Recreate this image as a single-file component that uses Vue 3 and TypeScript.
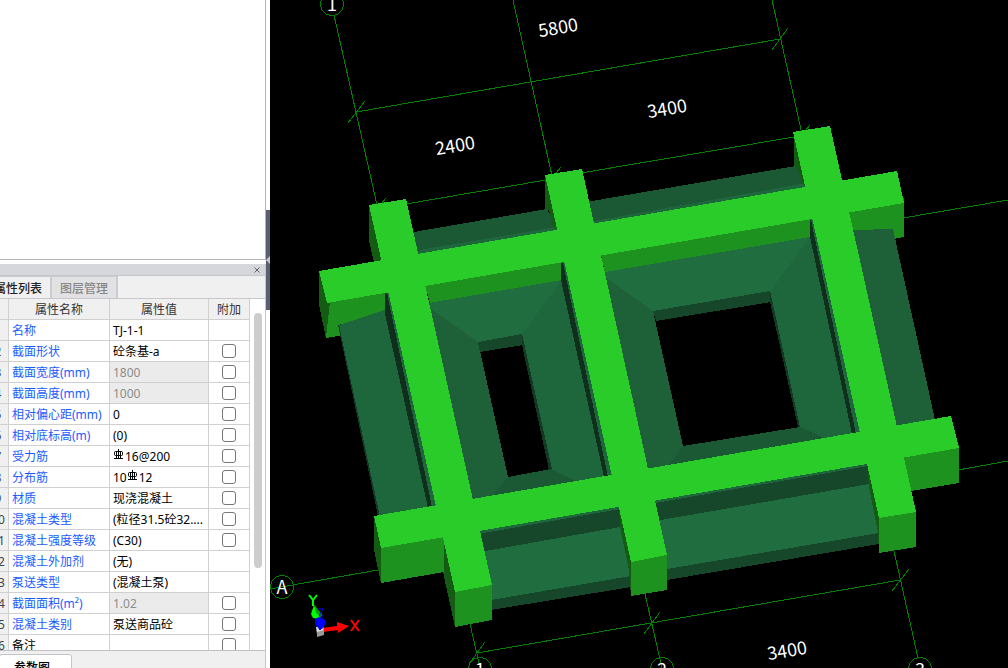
<script setup lang="ts">
import { reactive } from 'vue'

interface Property {
  name: string
  value: string[]
  checkable: boolean
  readonly?: boolean
  plain?: boolean
  checked: boolean
}

// A value is a list of fragments; a rebar grade mark stands between fragments.
const row = (name: string, value: string | string[], checkable = true, extra: Partial<Property> = {}): Property => ({
  name,
  value: Array.isArray(value) ? value : [value],
  checkable,
  checked: false,
  ...extra,
})

const rows = reactive<Property[]>([
  row('名称', 'TJ-1-1', false),
  row('截面形状', '砼条基-a'),
  row('截面宽度(mm)', '1800', true, { readonly: true }),
  row('截面高度(mm)', '1000', true, { readonly: true }),
  row('相对偏心距(mm)', '0'),
  row('相对底标高(m)', '(0)'),
  row('受力筋', ['', '16@200']),
  row('分布筋', ['10', '12']),
  row('材质', '现浇混凝土'),
  row('混凝土类型', '(粒径31.5砼32....'),
  row('混凝土强度等级', '(C30)'),
  row('混凝土外加剂', '(无)', false),
  row('泵送类型', '(混凝土泵)', false),
  row('截面面积(m²)', '1.02', true, { readonly: true }),
  row('混凝土类别', '泵送商品砼'),
  row('备注', '', true, { plain: true }),
])

interface Face {
  tone: string
  points: string
}

const faces: Face[] = [
  // outer slab, back side
  { tone: 'back', points: '408,233 547,209 562,235 416,260' },
  { tone: 'slope', points: '419,250 556,227 562,235 417,258' },
  { tone: 'back', points: '586,202 796,166 815,192 593,230' },
  { tone: 'slope', points: '594,221 806,183 812,192 594,228' },
  // front faces of the rear beam
  { tone: 'front', points: '326,300 390,290 386,328 338,336 326,338' },
  { tone: 'front', points: '424,282 562,258 562,280 430,303' },
  { tone: 'front', points: '600,250 811,214 811,237 605,273' },
  { tone: 'front', points: '848,208 904,198 904,237 848,248' },
  // outer slab, left and right sides
  { tone: 'rim', points: '338,325 341,324 381,514 378,516' },
  { tone: 'slope', points: '339,325 385,310 432,508 380,517' },
  { tone: 'side', points: '853,230 893,229 935,420 895,428' },
  // left bay
  { tone: 'lit', points: '429,303 562,280 522,334 478,342 430,308' },
  { tone: 'side', points: '430,308 478,342 508,477 492,497 470,500' },
  { tone: 'slope', points: '562,280 522,334 551,469 575,482 608,477' },
  { tone: 'back', points: '508,477 551,469 576,481 492,496' },
  { tone: 'shade', points: '478,342 522,334 523,345 480,352' },
  { tone: 'rim', points: '522,334 552,469 549,470 522,345' },
  // right bay
  { tone: 'lit', points: '605,272 810,237 770,291 653,311 605,277' },
  { tone: 'side', points: '605,277 653,311 683,446 668,467 646,470' },
  { tone: 'slope', points: '810,237 770,291 800,427 824,439 856,434' },
  { tone: 'back', points: '683,446 800,427 825,438 668,466' },
  { tone: 'shade', points: '653,311 770,291 771,302 656,321' },
  { tone: 'rim', points: '770,291 800,427 798,427 770,302' },
  // shaded left faces along the long beams
  { tone: 'slope', points: '386,293 390,292 437,507 430,508' },
  { tone: 'slope', points: '562,262 566,261 613,476 606,477' },
  { tone: 'slope', points: '811,219 815,218 861,433 854,434' },
  { tone: 'groove', points: '385,293 387,293 432,507 428,508 385,314' },
  { tone: 'groove', points: '561,263 563,263 608,477 604,477 561,280' },
  { tone: 'groove', points: '810,220 811,220 856,434 852,434 810,237' },
  // outer slab, front side
  { tone: 'lit', points: '480,530 619,507 632,577 492,601' },
  { tone: 'shade', points: '480,533 620,509 620,527 480,552' },
  { tone: 'slope', points: '478,530 620,506 620,509 478,534' },
  { tone: 'shade', points: '491,600 631,576 631,587 491,610' },
  { tone: 'lit', points: '655,500 868,464 880,533 666,570' },
  { tone: 'shade', points: '655,503 868,466 869,484 655,521' },
  { tone: 'slope', points: '654,500 868,463 868,466 654,503' },
  { tone: 'shade', points: '667,569 879,533 879,544 667,580' },
  // beam ends, left faces
  { tone: 'dark', points: '369,205 369,241 374,262 390,261' },
  { tone: 'dark', points: '545,175 545,210 549,210 553,227 557,229 562,229' },
  { tone: 'dark', points: '794,132 794,167 797,167 802,183 805,186 812,186' },
  { tone: 'dark', points: '319,270 319,305 326,338 330,302' },
  { tone: 'dark', points: '374,516 374,550 381,583 385,547' },
  { tone: 'dark', points: '443,537 443,572 455,627 460,590' },
  { tone: 'dark', points: '619,506 620,527 629,570 631,596 636,561' },
  { tone: 'dark', points: '867,463 869,487 878,532 879,553 884,518' },
  // beam ends, front faces
  { tone: 'front', points: '381,545 444,534 444,572 381,583' },
  { tone: 'front', points: '902,455 959,445 959,483 911,491' },
  { tone: 'front', points: '455,589 492,582 492,620 455,627' },
  { tone: 'front', points: '631,559 667,552 667,590 631,596' },
  { tone: 'front', points: '879,516 916,509 916,547 879,553' },
  // top faces of the beams
  { tone: 'top', points: '319,271 897,171 904,203 327,303' },
  { tone: 'top', points: '374,516 951,416 959,448 381,548' },
  { tone: 'top', points: '369,205 406,199 492,585 455,592' },
  { tone: 'top', points: '545,175 582,169 667,555 631,562' },
  { tone: 'top', points: '793,132 830,126 916,512 879,518' },
]

const gridLines = [
  'M334 15L377 205', 'M513 0L552 176', 'M772 0L802 134',
  'M356 112L780 39', 'M406 204L546 180', 'M581 173L794 137',
  'M348 123L365 101', 'M772 50L788 28', 'M381 204L386 198', 'M556 173L561 167', 'M805 131L810 125',
  'M903 218L1008 200', 'M958 470L1008 461', 'M270 589L378 570',
  'M470 624L479 663', 'M645 594L662 668', 'M894 551L918 658',
  'M477 653L900 580', 'M485 642L469 664', 'M660 612L644 634', 'M909 569L892 591',
]

const dimensions = [
  { x: 558, y: 27, text: '5800' },
  { x: 455, y: 145, text: '2400' },
  { x: 667, y: 108, text: '3400' },
  { x: 787, y: 650, text: '3400' },
]

const axes = [
  { x: 332, y: 4, text: '1' },
  { x: 282, y: 587, text: 'A' },
  { x: 480, y: 669, text: '1' },
  { x: 662, y: 669, text: '2' },
  { x: 920, y: 669, text: '3' },
]

const bubble = (x: number, y: number): string =>
  Array.from({ length: 12 }, (_, i) => {
    const a = (i * Math.PI) / 6
    return `${Math.round(x + 12 * Math.cos(a))},${Math.round(y + 12 * Math.sin(a))}`
  }).join(' ')
</script>

<template>
  <div class="workspace">
    <aside class="dock">
      <section class="list-pane"></section>
      <section class="props">
        <header class="title-bar">
          <button class="close" type="button" aria-label="关闭">
            <svg viewBox="0 0 6 6" width="6" height="6"><path d="M.5 .5L5.500 5.500M5.500 .5L.5 5.500" /></svg>
          </button>
        </header>
        <nav class="tabs">
          <button class="tab active" type="button">属性列表</button>
          <button class="tab" type="button">图层管理</button>
        </nav>
        <div class="grid-area">
          <table>
            <colgroup>
              <col class="c-no" /><col class="c-name" /><col class="c-value" /><col class="c-extra" />
            </colgroup>
            <thead>
              <tr><th></th><th>属性名称</th><th>属性值</th><th>附加</th></tr>
            </thead>
            <tbody>
              <tr v-for="(item, i) in rows" :key="item.name">
                <td class="no">{{ i + 1 }}</td>
                <td class="name" :class="{ plain: item.plain }">{{ item.name }}</td>
                <td class="value" :class="{ locked: item.readonly }">
                  <template v-for="(part, p) in item.value" :key="p">
                    <svg v-if="p > 0" class="rebar" viewBox="0 0 11 11" width="11" height="11">
                      <path d="M5.500 0V10M3.500 2V10M7.500 2V10M1 9.500H10" />
                      <rect x="1.500" y="2.500" width="8" height="4" rx="1" />
                    </svg>{{ part }}</template>
                </td>
                <td class="extra">
                  <input v-if="item.checkable" v-model="item.checked" type="checkbox" :aria-label="item.name" />
                </td>
              </tr>
            </tbody>
          </table>
          <div class="track"><div class="thumb"></div></div>
        </div>
        <footer class="footer">
          <button class="sheet" type="button">参数图</button>
        </footer>
      </section>
    </aside>
    <div class="splitter">
      <button class="handle" type="button" aria-label="折叠">
        <svg viewBox="0 0 4 8" width="4" height="8"><path d="M4 0V8L0 4Z" /></svg>
      </button>
    </div>
    <main class="view">
      <svg class="scene" viewBox="270 0 738 668" preserveAspectRatio="xMinYMin slice">
        <g class="lines">
          <path v-for="d in gridLines" :key="d" :d="d" />
          <polygon v-for="a in axes" :key="a.x" :points="bubble(a.x, a.y)" />
        </g>
        <polygon v-for="(f, i) in faces" :key="i" :class="f.tone" :points="f.points" />
        <g class="labels">
          <text
            v-for="d in dimensions"
            :key="d.x"
            :transform="`translate(${d.x} ${d.y}) rotate(-10)`"
            y="7"
          >{{ d.text }}</text>
          <text v-for="a in axes" :key="a.x" :x="a.x" :y="a.y + 7">{{ a.text }}</text>
        </g>
        <g class="triad">
          <path class="x" d="M322 628L337 626V622L349 626L338 633V630L323 632Z" />
          <path class="y" d="M314 605L322 615L319 619L313 618L311 614Z" />
          <path class="y-shade" d="M314 605L316 613L320 616L322 614Z" />
          <path class="origin" d="M316 627L323 625L324 632L317 634Z" />
          <path class="origin-shade" d="M317 632L324 630V635L317 637Z" />
          <path class="z" d="M315 619L319 617L324 619L326 623L322 629H319L315 624Z" />
          <path class="z-line" d="M320 626V630" />
          <path class="z-glyph" d="M317 609H323L319 616H323" />
          <path class="y-glyph" d="M309 595L313 600L317 595M313 600V606" />
          <path class="x-glyph" d="M351 620L359 631M359 620L351 631" />
        </g>
      </svg>
    </main>
  </div>
</template>

<style>
body { overflow: hidden; }
</style>

<style scoped>
.workspace {
  display: flex;
  height: 100vh;
  overflow: hidden;
  background: #fff;
  font: 12px/18px "Noto Sans", "Noto Sans CJK SC", sans-serif;
  color: #000;
}
button { font: inherit; border: 0; padding: 0; margin: 0; border-radius: 0; background: none; }
.dock { flex: 0 0 266px; display: flex; flex-direction: column; overflow: hidden; }
.list-pane {
  flex: 2 0 0;
  max-height: 260px;
  box-sizing: border-box;
  border-right: 1px solid #b4b4b8;
  border-bottom: 1px solid #b4b4b8;
}
.props {
  flex: 3 0 0;
  min-height: 0;
  margin-top: 4px;
  display: flex;
  flex-direction: column;
  box-sizing: border-box;
  background: #f0f0f0;
  border-right: 1px solid #c4c6ca;
}
.title-bar {
  display: flex;
  align-items: center;
  justify-content: flex-end;
  height: 12px;
  padding-right: 5px;
  background: #d5d7dc;
  border-bottom: 1px solid #c4c6ca;
  box-sizing: border-box;
}
.close { display: flex; }
.close path { stroke: #666; fill: none; }
.tabs { display: flex; height: 23px; box-sizing: border-box; border-bottom: 1px solid #c8c8cc; }
.tab {
  width: 66px;
  height: 22px;
  padding-top: 2px;
  box-sizing: border-box;
  border-right: 2px solid #cbccd0;
  border-top: 1px solid #cbccd0;
  background: #e2e2e4;
  color: #888;
  font-weight: 500;
}
.tab.active { margin-left: -14px; background: #f0f0f0; color: #222; }
.grid-area { flex: 1 1 0; min-height: 0; display: flex; overflow: hidden; background: #fff; }
table {
  flex: none;
  table-layout: fixed;
  width: 262px;
  height: max-content;
  margin-left: -12px;
  border-spacing: 0;
}
.c-no { width: 21px; }
.c-name { width: 101px; }
.c-value { width: 99px; }
.c-extra { width: 41px; }
th, td {
  height: 18px;
  padding: 2px 0 0;
  border-right: 1px solid #d0d0d0;
  border-bottom: 1px solid #d0d0d0;
  white-space: nowrap;
  overflow: hidden;
}
th { background: #f0f0f0; color: #333; font-weight: 400; text-align: center; }
.no { background: #f0f0f0; color: #444; text-align: center; }
.name { padding-left: 3px; color: #1a5cff; }
.name.plain { color: #000; }
.value { padding-left: 3px; }
.locked { background: #ebebeb; color: #8c8c8c; }
.rebar { vertical-align: 1px; margin-right: 1px; }
.rebar path, .rebar rect { fill: none; stroke: #000; stroke-width: 1; }
.extra { height: 20px; padding-top: 0; text-align: center; line-height: 0; }
.extra input {
  appearance: none;
  width: 14px;
  height: 14px;
  margin: 0;
  border: 1px solid #777;
  border-radius: 3px;
  background: #fff;
  vertical-align: middle;
}
.extra input:checked { background: #1a5cff; }
.track { flex: 1; padding: 14px 0 0 4px; }
.thumb { width: 8px; height: 76%; max-height: 255px; border-radius: 4px; background: #cdcdcd; }
.footer { flex: none; height: 18px; box-sizing: border-box; border-top: 1px solid #c0c0c4; padding-top: 3px; overflow: hidden; }
.sheet {
  display: block;
  width: 73px;
  height: 26px;
  margin-left: -1px;
  padding: 2px 0 0 14px;
  box-sizing: border-box;
  text-align: left;
  background: #fff;
  border: 1px solid #c4c4c8;
  border-radius: 3px;
  font-weight: 500;
}
.splitter { flex: 0 0 4px; display: flex; flex-direction: column; padding-top: 210px; background: #fff; box-sizing: border-box; }
.handle { display: flex; align-items: center; height: 100px; background: #566070; }
.handle path { fill: #c4c8d0; }
.view { flex: 1; min-width: 0; background: #000; }
.scene { display: block; width: 100%; height: 100%; }
.scene polygon, .lines path { shape-rendering: crispEdges; }
.lines path, .lines polygon { fill: none; stroke: #008200; stroke-width: 1; }
.top { fill: #29cc29; }
.front { fill: #1e921e; }
.dark { fill: #145c14; }
.lit { fill: #206e40; }
.slope { fill: #1e663c; }
.side { fill: #1e6038; }
.back { fill: #1b5934; }
.shade { fill: #17472a; }
.rim { fill: #123a22; }
.groove { fill: #0f2f1c; }
.labels text {
  fill: #fff;
  font: 18px "Noto Sans CJK SC", sans-serif;
  text-anchor: middle;
}
.x { fill: #f00; }
.y { fill: #0f0; }
.y-shade { fill: #00a000; }
.z { fill: #00f; }
.origin { fill: #ddd; }
.origin-shade { fill: #999; }
.z-line, .z-glyph { fill: none; stroke: #00f; stroke-width: 2; }
.z-glyph { stroke-width: 1; }
.y-glyph { fill: none; stroke: #0f0; stroke-width: 2; }
.x-glyph { fill: none; stroke: #f00; stroke-width: 2; }
</style>
